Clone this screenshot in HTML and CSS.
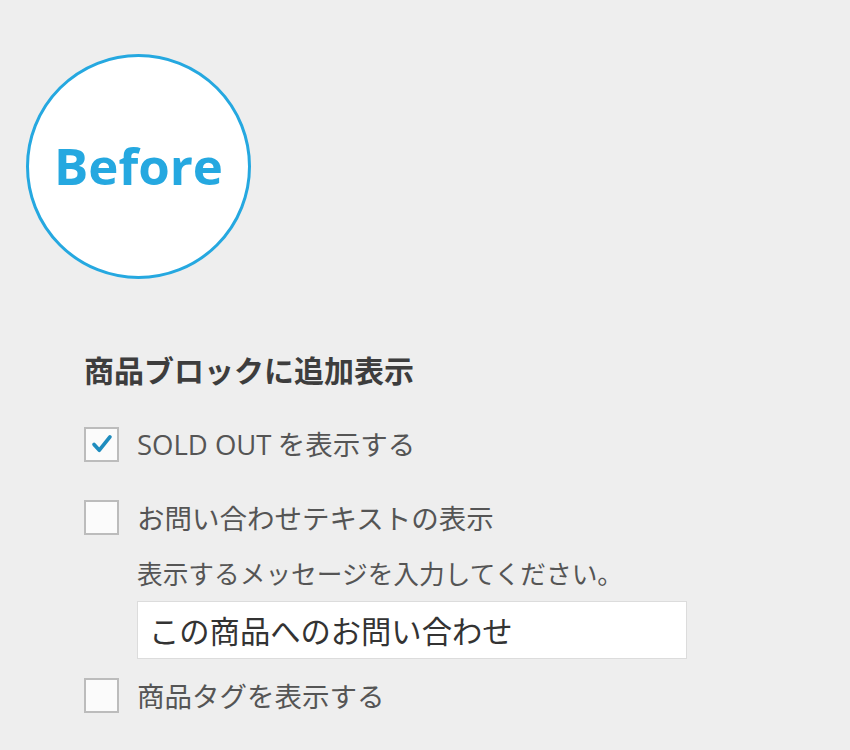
FILE: index.html
```html
<!DOCTYPE html>
<html lang="ja">
<head>
<meta charset="utf-8">
<link rel="stylesheet" href="styles.css">
</head>
<body>
<div class="page">
  <div class="badge">Before</div>
  <section class="settings">
    <h2 class="heading">商品ブロックに追加表示</h2>
    <div class="row row-first">
      <span class="box checked">
        <svg viewBox="0 0 34 34" width="30" height="30"><path d="M8 17.5 L14 24 L26 9" fill="none" stroke="#1e8cbe" stroke-width="4.2" stroke-linecap="round" stroke-linejoin="round"/></svg>
      </span>
      <span class="label"><span class="latin">SOLD OUT</span> を表示する</span>
    </div>
    <div class="row row-second">
      <span class="box"></span>
      <span class="label">お問い合わせテキストの表示</span>
    </div>
    <div class="sub">
      <p class="hint">表示するメッセージを入力してください。</p>
      <div class="field">この商品へのお問い合わせ</div>
    </div>
    <div class="row row-third">
      <span class="box"></span>
      <span class="label">商品タグを表示する</span>
    </div>
  </section>
</div>
</body>
</html>
```

FILE: styles.css
```css
html, body {
  margin: 0;
  padding: 0;
  background: #eeeeee;
}
body {
  font-family: "Noto Sans CJK JP", "Noto Sans", sans-serif;
  color: #555;
}
.page {
  padding: 54px 0 0 26px;
}
.badge {
  width: 225px;
  height: 225px;
  box-sizing: border-box;
  border: 3px solid #25a8e0;
  border-radius: 50%;
  background: #fff;
  display: flex;
  align-items: center;
  justify-content: center;
  color: #25a8e0;
  font-family: "Open Sans", sans-serif;
  font-weight: 700;
  font-size: 51px;
  line-height: 1;
  padding-bottom: 2px;
}
.settings {
  margin-left: 58px;
  margin-top: 73px;
}
.heading {
  margin: 0;
  font-size: 30px;
  line-height: 34px;
  font-weight: 700;
  color: #3d3d3d;
}
.row {
  display: flex;
  align-items: center;
}
.row-first { margin-top: 38px; }
.row-second { margin-top: 34px; }
.row-third { margin-top: 17px; }
.box {
  width: 35px;
  height: 35px;
  box-sizing: border-box;
  border: 2px solid #bcbcbc;
  background: #fbfbfb;
  display: flex;
  align-items: center;
  justify-content: center;
  flex: none;
}
.label {
  margin-left: 18px;
  font-size: 27.5px;
  line-height: 38px;
  color: #555;
}
.latin {
  font-family: "Open Sans", sans-serif;
}
.sub {
  margin-left: 53px;
  margin-top: 19px;
}
.hint {
  margin: 0;
  font-size: 25.7px;
  line-height: 36px;
  color: #555;
}
.field {
  margin-top: 10px;
  width: 550px;
  height: 58px;
  box-sizing: border-box;
  border: 1px solid #dcdcdc;
  background: #fff;
  padding-left: 11px;
  font-size: 30.3px;
  line-height: 56px;
  color: #333;
}
```
